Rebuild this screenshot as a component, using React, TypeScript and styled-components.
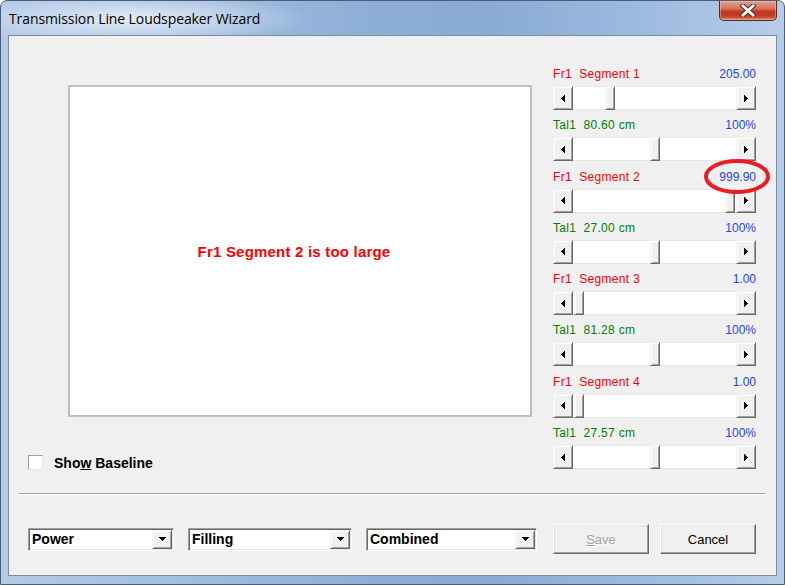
import React from 'react';
import styled, { createGlobalStyle } from 'styled-components';

const GlobalStyle = createGlobalStyle`
  html, body {
    margin: 0;
    padding: 0;
    background: #ffffff;
  }
  body {
    font-family: "Liberation Sans", Arial, sans-serif;
  }
`;

const Window = styled.div`
  width: 785px;
  height: 585px;
  box-sizing: border-box;
  display: flex;
  flex-direction: column;
  border: 1px solid #4a5d76;
  border-radius: 7px 7px 0 0;
  padding: 0 7px 8px 7px;
  background:
    radial-gradient(ellipse 175px 26px at 135px 18px, rgba(255, 255, 255, 0.7), rgba(255, 255, 255, 0) 100%),
    linear-gradient(90deg, #b3cae6 0%, #a2bfe1 22%, #8cadd6 48%, #88aad5 62%, #9dbbe0 82%, #b5cde9 100%);
`;

const TitleBar = styled.div`
  height: 34px;
  display: flex;
  justify-content: space-between;
  align-items: flex-start;
`;

const Title = styled.div`
  padding: 8px 0 0 1px;
  font-family: "Open Sans", "Noto Sans", sans-serif;
  font-size: 14px;
  letter-spacing: -0.1px;
  color: #000;
  white-space: nowrap;
`;

const CloseButton = styled.div`
  width: 58px;
  height: 20px;
  box-sizing: border-box;
  border: 1px solid #5e241c;
  border-top: none;
  border-radius: 0 0 5px 5px;
  display: flex;
  align-items: center;
  justify-content: center;
  background: linear-gradient(180deg, #e3a08f 0%, #d7735c 40%, #c0361d 55%, #c13f25 80%, #df8a6e 100%);
  box-shadow: inset 0 0 0 1px rgba(255, 215, 200, 0.4);
`;

const Client = styled.div`
  flex: 1;
  display: flex;
  flex-direction: column;
  background: #f0f0f0;
  border: 1px solid #7d8b9b;
`;

const MainRow = styled.div`
  display: grid;
  grid-template-columns: 504px 203px;
  column-gap: 21px;
  align-items: start;
  padding: 31px 0 0 19px;
`;

const LeftColumn = styled.div`
  display: flex;
  flex-direction: column;
`;

const Plot = styled.div`
  margin: 18px 0 0 40px;
  width: 464px;
  height: 332px;
  box-sizing: border-box;
  border: 2px solid #c0c0c0;
  background: #ffffff;
  display: flex;
  align-items: center;
  justify-content: center;
  padding-right: 12px;
`;

const PlotMessage = styled.span`
  color: #ff0000;
  font-weight: bold;
  font-size: 15px;
  letter-spacing: 0.2px;
`;

const CheckRow = styled.label`
  margin-top: 38px;
  display: flex;
  align-items: center;
  gap: 11px;
  font-weight: bold;
  font-size: 14px;
  color: #000;
  height: 15px;
`;

const CheckBox = styled.span`
  width: 15px;
  height: 15px;
  box-sizing: border-box;
  background: #ffffff;
  border: 1px solid;
  border-color: #a0a0a0 #e3e3e3 #e3e3e3 #a0a0a0;
`;

const Underline = styled.span`
  text-decoration: underline;
`;

const Panel = styled.div`
  display: flex;
  flex-direction: column;
  gap: 8.3px;
`;

const Group = styled.div`
  position: relative;
  display: flex;
  flex-direction: column;
`;

const LabelRow = styled.div<{ $tone: 'fr' | 'tal' }>`
  height: 19px;
  line-height: 14px;
  display: flex;
  justify-content: space-between;
  font-size: 12px;
  letter-spacing: 0.3px;
  white-space: pre;
  color: ${(p) => (p.$tone === 'fr' ? '#ff0000' : '#008000')};
`;

const Value = styled.span`
  color: #1f44f5;
  letter-spacing: 0;
`;

const Mark = styled.svg`
  position: absolute;
  left: 149px;
  top: -12px;
  overflow: visible;
`;

const Bar = styled.div`
  height: 24px;
  display: flex;
`;

const Raised = styled.div`
  box-sizing: border-box;
  background: #f0f0f0;
  border: 1px solid;
  border-color: #f0f0f0 #696969 #696969 #f0f0f0;
  box-shadow: inset 1px 1px #ffffff, inset -1px -1px #a0a0a0;
`;

const ArrowButton = styled(Raised)`
  width: 20px;
  display: flex;
  align-items: center;
  justify-content: center;
`;

const Track = styled.div`
  flex: 1;
  display: flex;
  background: #ffffff;
  box-shadow: inset 0 1px #e6e6e6, inset 0 -1px #e6e6e6;
`;

const TrackSpace = styled.div<{ $grow: number }>`
  flex: ${(p) => p.$grow} 1 0;
`;

const Thumb = styled(Raised)`
  width: 10px;
  flex: none;
`;

const Separator = styled.div`
  margin: 23px 11px 0 10px;
  height: 1px;
  background: #a0a0a0;
  border-bottom: 1px solid #ffffff;
`;

const BottomRow = styled.div`
  margin-top: 29px;
  padding-left: 19px;
  display: flex;
  align-items: center;
`;

const Combo = styled.div<{ $w: number; $gap: number }>`
  width: ${(p) => p.$w}px;
  margin-right: ${(p) => p.$gap}px;
  height: 23px;
  box-sizing: border-box;
  display: flex;
  align-items: center;
  padding: 1px;
  background: #ffffff;
  border: 1px solid;
  border-color: #a0a0a0 #ffffff #ffffff #a0a0a0;
  box-shadow: inset 1px 1px #696969, inset -1px -1px #e3e3e3;
`;

const ComboText = styled.span`
  flex: 1;
  padding-left: 2px;
  font-weight: bold;
  font-size: 14px;
  color: #000;
`;

const ComboButton = styled(Raised)`
  width: 20px;
  height: 19px;
  display: flex;
  align-items: center;
  justify-content: center;
`;

const PushButton = styled.div<{ $disabled?: boolean; $gap?: number }>`
  width: 96px;
  height: 30px;
  margin-right: ${(p) => p.$gap ?? 0}px;
  box-sizing: border-box;
  display: flex;
  align-items: center;
  justify-content: center;
  font-size: 13px;
  background: #f0f0f0;
  border: 1px solid;
  border-color: #ffffff #696969 #696969 #ffffff;
  box-shadow: inset -1px -1px #a0a0a0, inset 1px 1px #e3e3e3;
  color: ${(p) => (p.$disabled ? '#a0a0a0' : '#000000')};
  text-shadow: ${(p) => (p.$disabled ? '1px 1px #ffffff' : 'none')};
`;

const LeftArrow = () => (
  <svg width="4" height="7" shapeRendering="crispEdges">
    <polygon points="4,0 4,7 0,3.5" fill="#000" />
  </svg>
);

const RightArrow = () => (
  <svg width="4" height="7" shapeRendering="crispEdges">
    <polygon points="0,0 0,7 4,3.5" fill="#000" />
  </svg>
);

const DownArrow = () => (
  <svg width="7" height="4" shapeRendering="crispEdges">
    <polygon points="0,0 7,0 3.5,4" fill="#000" />
  </svg>
);

function ScrollBar({ pos }: { pos: number }) {
  return (
    <Bar>
      <ArrowButton>
        <LeftArrow />
      </ArrowButton>
      <Track>
        <TrackSpace $grow={pos} />
        <Thumb />
        <TrackSpace $grow={1 - pos} />
      </Track>
      <ArrowButton>
        <RightArrow />
      </ArrowButton>
    </Bar>
  );
}

type Row = { tone: 'fr' | 'tal'; name: string; value: string; pos: number; marked?: boolean };

const rows: Row[] = [
  { tone: 'fr', name: 'Fr1  Segment 1', value: '205.00', pos: 0.21 },
  { tone: 'tal', name: 'Tal1  80.60 cm', value: '100%', pos: 0.5 },
  { tone: 'fr', name: 'Fr1  Segment 2', value: '999.90', pos: 0.995, marked: true },
  { tone: 'tal', name: 'Tal1  27.00 cm', value: '100%', pos: 0.5 },
  { tone: 'fr', name: 'Fr1  Segment 3', value: '1.00', pos: 0.005 },
  { tone: 'tal', name: 'Tal1  81.28 cm', value: '100%', pos: 0.5 },
  { tone: 'fr', name: 'Fr1  Segment 4', value: '1.00', pos: 0.005 },
  { tone: 'tal', name: 'Tal1  27.57 cm', value: '100%', pos: 0.5 },
];

function App() {
  return (
    <>
      <GlobalStyle />
      <Window>
        <TitleBar>
          <Title>Transmission Line Loudspeaker Wizard</Title>
          <CloseButton>
            <svg width="16" height="13" viewBox="0 0 16 13">
              <path d="M3 2 L13 11 M13 2 L3 11" stroke="#4b2a26" strokeWidth="4.8" strokeLinecap="square" />
              <path d="M3 2 L13 11 M13 2 L3 11" stroke="#ffffff" strokeWidth="2.8" strokeLinecap="square" />
            </svg>
          </CloseButton>
        </TitleBar>

        <Client>
          <MainRow>
            <LeftColumn>
              <Plot>
                <PlotMessage>Fr1 Segment 2 is too large</PlotMessage>
              </Plot>
              <CheckRow>
                <CheckBox />
                <span>
                  Sho<Underline>w</Underline> Baseline
                </span>
              </CheckRow>
            </LeftColumn>

            <Panel>
              {rows.map((row) => (
                <Group key={row.name}>
                  <LabelRow $tone={row.tone}>
                    <span>{row.name}</span>
                    <Value>{row.value}</Value>
                  </LabelRow>
                  {row.marked && (
                    <Mark width="70" height="37">
                      <ellipse cx="35" cy="18.5" rx="31" ry="15.5" fill="none" stroke="#ec1c24" strokeWidth="4" />
                    </Mark>
                  )}
                  <ScrollBar pos={row.pos} />
                </Group>
              ))}
            </Panel>
          </MainRow>

          <Separator />

          <BottomRow>
            <Combo $w={146} $gap={14}>
              <ComboText>Power</ComboText>
              <ComboButton>
                <DownArrow />
              </ComboButton>
            </Combo>
            <Combo $w={164} $gap={14}>
              <ComboText>Filling</ComboText>
              <ComboButton>
                <DownArrow />
              </ComboButton>
            </Combo>
            <Combo $w={171} $gap={16}>
              <ComboText>Combined</ComboText>
              <ComboButton>
                <DownArrow />
              </ComboButton>
            </Combo>
            <PushButton $disabled $gap={11}>
              <Underline>S</Underline>ave
            </PushButton>
            <PushButton>Cancel</PushButton>
          </BottomRow>
        </Client>
      </Window>
    </>
  );
}

export default App;
